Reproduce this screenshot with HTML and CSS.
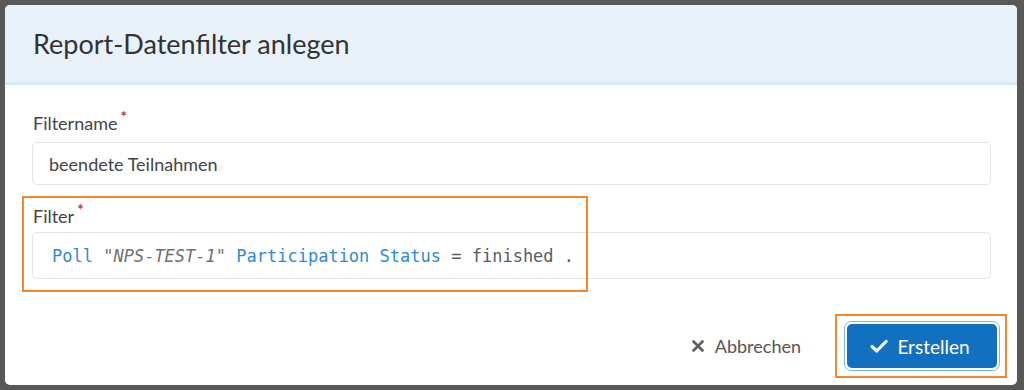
FILE: index.html
```html
<!DOCTYPE html>
<html lang="de">
<head>
<meta charset="utf-8">
<title>Report-Datenfilter anlegen</title>
<link rel="stylesheet" href="styles.css">
</head>
<body>
<div class="modal">
  <div class="modal-header">
    <h1 class="modal-title">Report-Datenfilter anlegen</h1>
  </div>
  <div class="modal-body">
    <div class="field field-name">
      <label class="label">Filtername<span class="req">*</span></label>
      <div class="input"><span>beendete Teilnahmen</span></div>
    </div>
    <div class="field field-filter">
      <label class="label">Filter<span class="req">*</span></label>
      <div class="input code"><span class="code-line"><span class="kw">Poll</span> <span class="str">"NPS-TEST-1"</span> <span class="kw">Participation Status</span> <span class="op">= finished .</span></span></div>
    </div>
  </div>
  <div class="modal-footer">
    <button class="btn-cancel">
      <svg class="x-icon" viewBox="0 0 12 12" width="12" height="12"><path d="M1.5 1.5 L10.5 10.5 M10.5 1.5 L1.5 10.5" stroke="#5f5f5f" stroke-width="2.6" stroke-linecap="round"/></svg>
      Abbrechen
    </button>
    <div class="btn-ring">
      <button class="btn-primary">
        <svg class="check-icon" viewBox="0 0 18 14" width="18" height="14"><path d="M2 7.5 L6.8 12 L16 2.5" fill="none" stroke="#fff" stroke-width="3.2" stroke-linecap="round" stroke-linejoin="round"/></svg>
        Erstellen
      </button>
    </div>
  </div>
  <div class="hl hl-filter"></div>
  <div class="hl hl-button"></div>
</div>
</body>
</html>
```

FILE: styles.css
```css
html, body {
  margin: 0;
  padding: 0;
}
body {
  background: #585858;
  width: 1024px;
  height: 390px;
  overflow: hidden;
  font-family: Lato, "Open Sans", Arial, sans-serif;
  color: #333;
}
.modal {
  position: relative;
  margin: 5px 0 0 5px;
  width: 1012px;
  height: 380px;
  background: #fff;
  border-radius: 5px;
  overflow: hidden;
  display: flex;
  flex-direction: column;
}
.modal-header {
  height: 77px;
  background: #e9f1f9;
  border-bottom: 3px solid #dae9f6;
  display: flex;
  align-items: center;
  padding-left: 28px;
}
.modal-title {
  margin: 0;
  font-size: 27px;
  font-weight: 400;
  color: #333;
}
.modal-body {
  padding: 28px 26px 0 27px;
  display: flex;
  flex-direction: column;
}
.label {
  display: block;
  font-size: 18px;
  line-height: 20px;
  height: 20px;
  color: #444;
  padding-left: 1px;
  margin-bottom: 9px;
}
.req {
  position: relative;
  top: -8px;
  color: #d9262c;
  font-size: 15px;
  font-weight: 700;
  line-height: 0;
  margin-left: 3px;
}
.input {
  border: 1px solid #e3e3e3;
  border-radius: 5px;
  height: 41px;
  box-sizing: content-box;
  display: flex;
  align-items: center;
  padding-left: 16px;
  font-size: 18px;
  color: #444;
}
.field-filter {
  margin-top: 21px;
}
.field-filter .label {
  margin-bottom: 6px;
}
.code {
  height: 45px;
  padding-left: 19px;
  font-family: "DejaVu Sans Mono", "Liberation Mono", monospace;
  font-size: 17px;
  color: #5c5c5c;
}
.code-line {
  white-space: pre;
}
.kw { color: #2e8ad8; }
.str { color: #707070; font-style: italic; }
.op { color: #5c5c5c; }
.modal-footer {
  margin-top: auto;
  height: 84px;
  display: flex;
  align-items: center;
  justify-content: flex-end;
  padding-right: 17px;
  padding-top: 6px;
  box-sizing: border-box;
}
.btn-cancel {
  background: none;
  border: none;
  font-family: Lato, Arial, sans-serif;
  font-size: 18px;
  color: #555;
  display: flex;
  align-items: center;
  gap: 11px;
  padding: 0;
  margin-right: 43px;
  cursor: pointer;
}
.btn-ring {
  border: 1px solid #7db7ea;
  border-radius: 7px;
  padding: 2px;
  display: flex;
}
.btn-primary {
  width: 150px;
  height: 44px;
  background: #1170bf;
  border: none;
  border-radius: 5px;
  color: #fff;
  font-family: Lato, Arial, sans-serif;
  font-size: 19px;
  display: flex;
  align-items: center;
  justify-content: center;
  gap: 9px;
  padding: 0 4px 0 0;
  cursor: pointer;
}
.hl {
  position: absolute;
  border: 2px solid #f7832b;
  pointer-events: none;
}
.hl-filter {
  left: 17px;
  top: 191px;
  width: 562px;
  height: 92px;
}
.hl-button {
  left: 830px;
  top: 309px;
  width: 168px;
  height: 60px;
}
```
